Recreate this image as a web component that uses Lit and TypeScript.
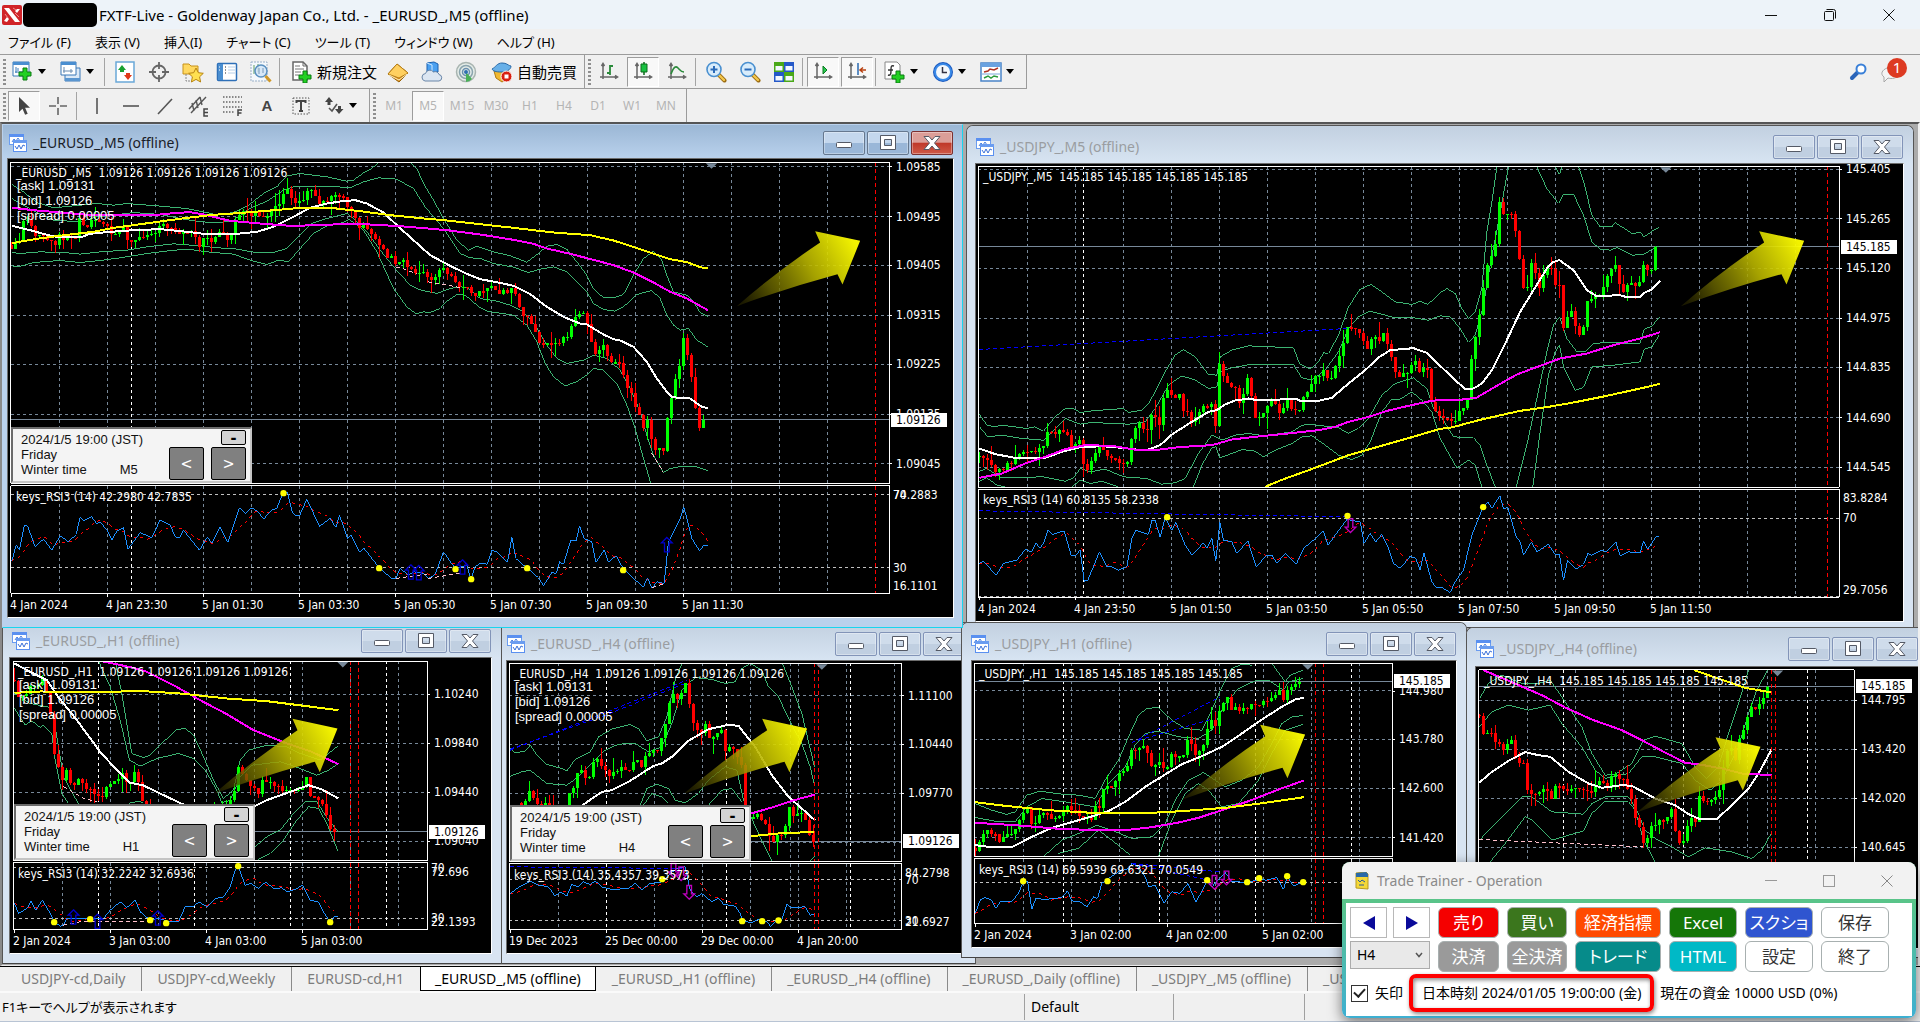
import { LitElement, html, svg, css, nothing } from "lit";
import { customElement, property } from "lit/decorators.js";
import { classMap } from "lit/directives/class-map.js";
import { styleMap } from "lit/directives/style-map.js";

type Pt = [number, number];

interface Chart {
  origin: Pt;
  plot: [number, number, number, number];
  sub: [number, number];
  grid: number[];
  days: number[];
  red: number[];
  levels: number[];
  bid: number;
  subLevels: number[];
  axisX: number;
  axis: [number, string][];
  bidText: string;
  subAxis: [number, string][];
  dates: [number, string][];
  ma: string[];
  bands: string[];
  price: string[];
  rsi: string;
  dots: string;
  up?: string;
  down?: string;
  pink?: string[];
  blue?: string[];
  marker: number;
  tip: Pt;
  head: string;
  quotes?: boolean;
  rsiHead: string;
}

interface Win {
  title: string;
  active?: boolean;
  x: number;
  y: number;
  w: number;
  h: number;
  cx: number;
  cy: number;
  cw: number;
  ch: number;
  panel?: { x: number; y: number; tf: string };
  chart: Chart;
}

const pts = (s: string): Pt[] =>
  s.trim().split(/\s+/).map((p) => p.split(",").map(Number) as Pt);

/* Straight-line value of a series at a given x. */
const at = (s: Pt[], x: number): number => {
  if (x <= s[0][0]) return s[0][1];
  for (let i = 1; i < s.length; i++) {
    if (x <= s[i][0]) {
      const [a, b] = [s[i - 1], s[i]];
      return a[1] + ((b[1] - a[1]) * (x - a[0])) / (b[0] - a[0] || 1);
    }
  }
  return s[s.length - 1][1];
};

const steps = (from: number, to: number, by: number) => {
  const out: number[] = [];
  for (let v = from; v <= to; v += by) out.push(v);
  return out;
};

/* Chart series are kept on a grid of three units to the pixel. */
const eurM5: Chart = {
  origin: [0, 125],
  plot: [32, 112, 2669, 1075],
  sub: [1082, 1405],
  grid: steps(179, 2500, 144),
  days: [395],
  red: [2627],
  levels: [125, 275, 421, 571, 718, 868, 1016],
  bid: 884,
  subLevels: [1109, 1328],
  axisX: 896,
  axis: [[125, "1.09585"], [275, "1.09495"], [421, "1.09405"], [571, "1.09315"], [718, "1.09225"], [868, "1.09135"], [1016, "1.09045"]],
  bidText: "1.09126",
  subAxis: [[1109, "74.2883"], [1109, "70"], [1328, "30"], [1382, "16.1101"]],
  dates: [[30, "4 Jan 2024"], [318, "4 Jan 23:30"], [607, "5 Jan 01:30"], [895, "5 Jan 03:30"], [1183, "5 Jan 05:30"], [1471, "5 Jan 07:30"], [1759, "5 Jan 09:30"], [2047, "5 Jan 11:30"]],
  ma: [
    "35,302 90,315 155,333 190,337 240,337 270,326 330,320 400,315 480,312 560,320 620,327 700,327 770,320 820,305 870,280 930,248 980,235 1020,229 1065,225 1100,235 1150,262 1190,300 1240,345 1290,390 1350,422 1400,446 1440,462 1500,473 1540,482 1590,507 1640,545 1690,575 1740,595 1760,598 1810,628 1840,642 1860,646 1900,665 1940,710 1970,760 2000,800 2015,815 2040,819 2070,820 2105,845 2123,849",
    "35,248 110,256 250,268 380,270 460,270 520,264 570,261 610,268 690,287 790,296 870,302 960,300 1040,296 1110,298 1200,303 1260,308 1340,315 1440,328 1540,344 1600,356 1640,370 1710,386 1780,404 1840,420 1900,442 1960,472 2010,500 2060,520 2123,555",
    "35,354 110,341 200,329 280,320 340,308 400,300 480,289 560,278 640,269 700,265 800,257 900,248 1000,249 1080,258 1170,270 1250,278 1340,286 1440,297 1540,308 1660,322 1770,330 1840,346 1890,362 1950,382 2010,402 2060,411 2100,426 2123,430",
  ],
  bands: [
    "35,178 70,200 110,232 160,248 240,240 290,235 340,240 380,235 470,242 560,250 620,262 650,270 700,262 745,240 790,205 830,185 860,152 900,145 980,155 1040,168 1060,165 1090,143 1115,130 1135,112",
    "1230,112 1250,130 1270,175 1300,225 1330,280 1370,345 1405,375 1430,363 1480,380 1530,392 1580,411 1615,385 1640,363 1670,358 1700,372 1730,410 1760,450 1780,490 1810,518 1840,518 1870,508 1900,450 1930,400 1960,378 1985,405 2000,450 2020,500 2060,510 2080,530 2100,562 2123,573",
    "35,220 60,235 110,262 160,285 240,290 290,275 340,270 400,262 480,268 540,280 600,290 660,292 700,285 745,252 800,228 850,195 880,185 940,183 1000,184 1050,188 1090,170 1135,158 1190,162 1240,190 1275,245 1330,310 1380,385 1410,398 1440,400 1480,415 1540,426 1585,442 1620,432 1660,425 1700,440 1730,470 1760,500 1780,535 1810,553 1845,558 1870,545 1910,508 1955,496 1980,520 2000,570 2020,600 2040,615 2065,610 2090,645 2123,665",
    "35,382 60,385 120,380 200,383 240,387 300,380 380,375 440,365 520,356 600,362 650,368 700,370 760,381 820,382 860,370 895,335 935,295 980,280 1040,265 1060,280 1100,320 1140,375 1180,425 1230,480 1255,493 1310,505 1350,490 1380,485 1400,487 1440,520 1490,528 1530,540 1570,560 1605,600 1640,660 1670,700 1700,715 1750,705 1780,690 1820,700 1860,735 1890,790 1920,860 1940,930 1960,990 1990,1042 2010,1030 2040,1024 2090,1025 2123,1036",
    "35,422 55,425 100,412 180,406 240,412 300,406 360,398 440,385 520,375 570,373 620,380 700,387 750,405 800,418 835,405 865,410 900,370 940,325 980,302 1020,295 1048,283 1090,315 1130,380 1180,490 1220,545 1248,566 1270,560 1290,562 1320,550 1340,528 1370,508 1395,510 1440,548 1460,558 1540,570 1580,600 1610,650 1635,715 1660,755 1695,782 1730,770 1770,742 1780,730 1810,735 1850,775 1880,840 1905,910 1930,1000 1952,1075",
  ],
  price: [
    "35,365 50,345 62,350 75,275 95,310 110,340 130,330 150,345 165,365 180,330 205,345 230,340 240,280 260,300 290,285 310,300 340,325 370,310 385,360 395,355 420,325 450,330 465,330 485,295 520,310 545,330 570,320 600,360 620,340 640,345 665,320 690,355 705,300 715,265 745,270 770,262 800,272 840,240 860,195 885,238 905,235 925,185 945,205 965,240 990,220 1030,210 1045,255 1080,300 1120,325 1145,370 1170,400 1195,412 1215,410 1230,435 1260,440 1290,462 1320,435 1340,430 1370,485 1405,480 1420,525 1440,505 1480,490 1530,512 1537,475 1555,545 1590,590 1630,670 1660,650 1700,640 1715,595 1745,555 1765,595 1785,690 1810,655 1835,715 1855,700 1880,780 1905,830 1930,900 1950,885 1958,985 1985,970 1995,985 2005,845 2040,720 2052,640 2075,750 2088,850 2100,915 2112,885",
  ],
  rsi: "35,1307 48,1260 58,1275 72,1202 82,1202 105,1265 130,1242 155,1275 180,1232 205,1250 228,1228 240,1175 250,1187 275,1175 290,1197 300,1190 320,1215 335,1245 350,1218 370,1207 383,1272 400,1250 420,1222 455,1238 480,1184 510,1200 525,1235 538,1238 550,1215 598,1275 622,1235 635,1255 660,1205 683,1252 700,1200 718,1148 735,1165 755,1148 775,1160 790,1182 815,1155 830,1150 848,1103 862,1100 875,1158 885,1170 898,1172 920,1122 940,1165 958,1204 990,1180 1007,1207 1018,1170 1042,1240 1052,1230 1078,1280 1092,1270 1137,1328 1175,1360 1187,1360 1200,1330 1225,1350 1240,1340 1270,1345 1285,1360 1305,1348 1330,1280 1365,1330 1400,1320 1412,1362 1425,1325 1440,1315 1462,1317 1475,1275 1490,1280 1522,1312 1535,1235 1547,1300 1580,1328 1615,1358 1630,1382 1655,1342 1668,1345 1678,1310 1690,1318 1712,1245 1728,1247 1738,1202 1752,1240 1775,1250 1787,1312 1812,1275 1825,1310 1848,1292 1870,1332 1900,1360 1930,1385 1942,1358 1956,1390 1970,1370 1992,1375 2005,1250 2040,1180 2051,1145 2075,1240 2098,1277 2110,1262 2123,1260",
  dots: "850,1104 1137,1329 1366,1332 1413,1362 1581,1329 1869,1335",
  up: "1232,1340 1256,1342 1387,1325 2000,1258",
  pink: ["1187,425 1250,445", "1285,470 1380,487", "1187,1360 1290,1345", "1285,1360 1390,1342", "1955,985 1990,1042", "1956,1388 1992,1375"],
  marker: 2134,
  tip: [2580, 347],
  head: "_EURUSD_,M5  1.09126 1.09126 1.09126 1.09126",
  quotes: true,
  rsiHead: "keys_RSI3 (14) 42.2980 42.7835",
};

const usdM5: Chart = {
  origin: [965, 125],
  plot: [40, 124, 2623, 1087],
  sub: [1093, 1416],
  grid: steps(187, 2500, 144),
  days: [355],
  red: [2587],
  levels: [133, 281, 430, 580, 727, 878, 1027],
  bid: 365,
  subLevels: [1180, 1413],
  axisX: 1846,
  axis: [[133, "145.405"], [281, "145.265"], [430, "145.120"], [580, "144.975"], [727, "144.835"], [878, "144.690"], [1027, "144.545"]],
  bidText: "145.185",
  subAxis: [[1120, "83.8284"], [1180, "70"], [1394, "29.7056"]],
  dates: [[39, "4 Jan 2024"], [327, "4 Jan 23:50"], [615, "5 Jan 01:50"], [903, "5 Jan 03:50"], [1191, "5 Jan 05:50"], [1479, "5 Jan 07:50"], [1767, "5 Jan 09:50"], [2055, "5 Jan 11:50"]],
  ma: [
    "43,970 90,987 150,998 240,998 290,980 340,967 410,963 470,968 530,975 550,973 585,960 620,928 680,890 730,860 755,855 780,838 810,826 850,820 870,824 930,824 990,820 1010,829 1050,829 1100,818 1150,775 1200,735 1240,697 1275,675 1345,669 1385,683 1425,722 1465,760 1500,792 1525,790 1550,775 1580,735 1625,645 1665,560 1705,495 1745,430 1765,410 1783,405 1825,435 1865,495 1895,513 1965,510 1985,516 2025,516 2037,503 2060,493 2085,467",
    "43,1058 110,1045 180,1015 240,995 300,972 360,960 440,962 520,975 570,975 640,966 740,960 800,943 870,935 960,926 1060,915 1110,905 1150,890 1210,875 1270,856 1330,842 1390,829 1425,824 1485,824 1535,817 1595,782 1655,748 1725,722 1785,700 1865,685 1945,660 2025,640 2085,621",
    "900,1085 950,1064 1050,1028 1150,990 1200,976 1270,956 1340,936 1425,911 1455,908 1545,884 1665,857 1745,846 1825,832 1925,812 2025,790 2085,776",
  ],
  bands: [
    "43,868 65,900 90,905 110,900 185,910 210,905 235,918 270,875 300,850 325,850 345,862 380,857 475,850 490,862 530,855 550,835 570,800 600,740 630,690 655,673 690,695 730,748 755,750 765,695 800,675 850,662 985,668 1003,715 1035,732 1060,710 1075,683 1090,685 1120,630 1150,545 1185,492 1217,478 1250,500 1290,530 1340,538 1365,528 1388,538 1425,503 1445,490 1470,505 1490,550 1510,580 1530,560 1550,490 1565,320 1580,230 1595,125",
    "1770,125 1783,148 1790,125",
    "1840,125 1857,175 1880,270 1905,305 1940,305 1950,292 2000,325 2025,322 2037,335 2065,315 2082,307",
    "43,905 68,935 110,930 170,940 235,945 275,905 300,880 345,897 380,892 490,897 540,890 570,850 610,780 650,752 690,765 730,790 755,785 765,740 800,728 860,717 985,718 1010,758 1040,765 1080,735 1120,680 1150,610 1180,575 1215,558 1290,578 1345,578 1390,585 1425,572 1455,575 1485,610 1510,652 1530,630 1555,540 1575,420 1600,290 1630,125",
    "1715,125 1745,190 1780,235 1795,207 1825,207 1855,270 1880,350 1905,372 1935,375 1955,367 2000,390 2035,388 2065,370 2082,362",
    "43,1038 65,1030 110,1058 235,1055 300,1068 325,1058 345,1030 375,1040 420,1032 475,1055 545,1060 590,1077 630,1073 660,1060 700,985 740,930 770,945 810,930 850,925 900,932 980,920 1010,900 1040,898 1120,908 1150,925 1180,910 1210,880 1250,810 1290,775 1345,758 1385,790 1405,850 1425,870 1465,935 1525,938 1545,960 1565,1020 1590,1085",
    "1653,1085 1685,960 1715,820 1745,680 1765,600 1783,575 1805,640 1835,680 1860,680 1885,655 1925,652 2025,655 2037,612 2060,603 2082,577",
    "43,1068 65,1058 95,1080 120,1085",
    "320,1085 345,1065 375,1075 410,1068 460,1085",
    "685,1085 710,1020 740,968 752,965 763,998 800,985 830,973 870,978 895,995 930,975 980,955 1010,935 1040,932 1080,960 1120,990 1160,1003 1190,990 1215,950 1250,860 1280,822 1305,822 1340,800 1370,825 1400,860 1425,940 1475,1028 1510,1005 1530,1020 1550,1085",
    "1703,1085 1725,920 1750,750 1770,680 1783,660 1795,725 1830,795 1855,787 1880,725 1945,720 2025,710 2037,672 2060,665 2082,630",
  ],
  price: [
    "43,1000 60,992 70,1020 95,1040 130,1015 150,1005 185,978 205,985 235,970 250,915 270,925 300,912 320,960 345,950 357,1035 370,1035 400,970 415,970 430,1000 470,1015 487,1010 500,930 515,900 550,910 562,850 585,895 597,815 610,795 625,830 637,795 655,850 680,890 710,855 740,840 752,900 765,685 778,765 810,780 825,830 850,755 873,890 900,850 930,825 935,870 965,825 1000,870 1020,800 1050,765 1075,730 1095,770 1125,680 1148,610 1190,615 1200,680 1225,625 1240,660 1255,620 1275,670 1290,745 1320,750 1345,705 1370,755 1382,695 1400,830 1420,885 1435,870 1455,900 1485,860 1505,835 1520,690 1545,570 1560,460 1575,380 1585,410 1605,220 1620,280 1635,245 1650,320 1665,410 1680,520 1700,410 1720,490 1750,415 1775,490 1790,480 1798,690 1810,540 1825,570 1840,630 1860,590 1870,500 1885,530 1915,480 1953,415 1967,500 1995,480 2025,480 2037,405 2053,450 2073,365",
  ],
  rsi: "43,1315 55,1308 70,1325 93,1350 115,1315 155,1305 180,1273 200,1280 212,1253 225,1270 237,1250 248,1215 262,1228 280,1222 297,1217 318,1290 330,1292 345,1275 357,1368 368,1365 403,1280 425,1325 440,1325 460,1335 485,1325 500,1240 512,1215 550,1228 560,1185 570,1185 585,1237 600,1178 620,1215 632,1192 660,1260 680,1290 715,1253 725,1270 740,1240 752,1308 764,1190 775,1245 800,1250 815,1285 848,1247 873,1325 905,1290 920,1290 935,1315 960,1285 993,1318 1015,1270 1045,1245 1075,1217 1088,1260 1145,1183 1185,1190 1197,1255 1215,1225 1232,1250 1250,1228 1268,1265 1285,1315 1305,1330 1335,1293 1352,1300 1365,1335 1376,1283 1400,1370 1412,1387 1430,1387 1455,1402 1470,1370 1495,1335 1520,1230 1550,1155 1568,1130 1580,1150 1604,1112 1615,1150 1628,1147 1653,1235 1665,1250 1675,1290 1699,1250 1715,1280 1750,1257 1770,1288 1783,1287 1795,1365 1807,1305 1832,1332 1855,1318 1868,1285 1880,1290 1905,1277 1925,1278 1952,1250 1965,1292 1990,1280 2025,1283 2035,1248 2048,1272 2072,1235 2082,1234",
  dots: "606,1176 1147,1172 1554,1146",
  down: "1156,1203",
  blue: ["43,673 1145,610", "43,1157 1150,1175"],
  marker: 2102,
  tip: [2517, 347],
  head: "_USDJPY_,M5  145.185 145.185 145.185 145.185",
  rsiHead: "keys_RSI3 (14) 60.8135 58.2338",
};

const eurH1: Chart = {
  origin: [0, 620],
  plot: [40, 123, 1283, 720],
  sub: [728, 928],
  grid: [187, 331, 475, 619, 763, 907, 1051, 1195],
  days: [295, 583, 871, 1159],
  red: [1051, 1075],
  levels: [223, 370, 517, 664],
  bid: 635,
  subLevels: [742, 895],
  axisX: 434,
  axis: [[223, "1.10240"], [370, "1.09840"], [517, "1.09440"], [664, "1.09040"]],
  bidText: "1.09126",
  subAxis: [[744, "70"], [755, "72.696"], [895, "30"], [905, "22.1393"]],
  dates: [[40, "2 Jan 2024"], [328, "3 Jan 03:00"], [616, "4 Jan 03:00"], [904, "5 Jan 03:00"]],
  ma: [
    "43,130 90,155 140,180 170,225 230,300 300,395 350,450 388,487 430,496 480,520 545,551 640,590 765,557 800,540 870,515 925,495 965,508 1015,535",
    "305,123 400,143 440,155 520,195 600,240 680,282 760,330 860,370 930,393 1015,432",
    "43,218 120,214 300,215 430,213 540,220 680,235 800,243 920,258 1015,270",
  ],
  bands: [
    "43,265 75,315 95,302 120,322 130,315 155,340 165,420 185,520 205,550",
    "43,220 90,250 150,262 165,320 190,470 235,551",
    "345,123 365,220 395,400 430,412 450,405 490,365 530,328 555,325 580,345 610,410 640,480 670,535 700,510 720,420 745,390 800,375 860,380 900,400 960,420 985,400 1013,378",
    "295,123 330,200 360,300 388,420 420,438 470,415 535,400 580,415 615,450 650,510 665,548 690,540 720,470 755,435 840,425 900,445 950,465 985,450 1015,430",
    "765,680 800,650 840,630 880,580 915,545 950,545 985,600 1015,635",
    "775,718 810,700 850,660 890,600 925,560 955,565 980,610 1013,692",
    "388,549 415,543 430,549",
  ],
  price: [
    "43,185 60,240 90,200 130,180 150,265 162,400 175,450 190,490 203,445 215,525 230,470 260,505 295,535 330,490 350,485 365,450 385,490 410,455 430,545 450,580 550,620 690,545 705,510 716,435 735,475 760,500 775,515 790,475 810,480 830,505 870,515 900,500 920,480 935,535 960,540 985,590 995,655 1003,635",
  ],
  rsi: "43,850 55,880 80,865 93,843 107,870 127,840 150,880 162,905 180,918 190,915 200,895 230,895 270,897 310,895 330,870 360,845 380,862 405,840 420,875 450,900 475,895 510,905 535,905 555,860 580,858 597,845 620,860 645,835 670,830 690,800 705,750 714,738 735,795 752,790 775,805 797,785 820,805 845,803 860,815 885,808 907,795 930,840 955,845 970,875 990,905 1005,888 1013,890",
  dots: "162,906 270,897 450,900 498,909 714,738 990,906",
  up: "220,890 292,903 473,893",
  pink: ["190,915 240,905 460,905", "190,500 250,535 290,545"],
  marker: 1028,
  tip: [1012, 325],
  head: "_EURUSD_,H1  1.09126 1.09126 1.09126 1.09126",
  quotes: true,
  rsiHead: "keys_RSI3 (14) 32.2242 32.6936",
};

const eurH4: Chart = {
  origin: [495, 620],
  plot: [43, 130, 1220, 723],
  sub: [731, 928],
  grid: [190, 478, 622, 766, 886, 910, 1054, 1198],
  days: [334, 694, 1066],
  red: [958, 970],
  levels: [227, 373, 520, 667],
  bid: 664,
  subLevels: [778, 902],
  axisX: 908,
  axis: [[227, "1.11100"], [373, "1.10440"], [520, "1.09770"]],
  bidText: "1.09126",
  subAxis: [[758, "84.2798"], [780, "70"], [904, "30"], [905, "21.6927"]],
  dates: [[43, "19 Dec 2023"], [331, "25 Dec 00:00"], [619, "29 Dec 00:00"], [905, "4 Jan 20:00"]],
  ma: [
    "262,555 320,515 350,510 400,485 475,437 500,430 530,410 580,362 640,327 700,314 730,317 780,380 830,465 880,530 920,565 960,601",
    "768,580 830,562 890,542 960,523",
    "768,648 870,638 960,636",
  ],
  bands: [
    "45,385 60,398 90,393 105,375 125,405 155,433 200,445 215,452 240,418 285,395 310,350 350,327 405,313 430,325 455,362 490,350 515,290 540,180 560,130",
    "45,468 80,455 105,450 155,490 215,495 250,470 300,420 330,390 370,372 420,370 460,395 500,380 530,310 560,210 600,172 650,178 690,190 720,185 740,145 765,130 800,150 820,200 850,230 885,305 920,370 945,440 958,495",
    "862,130 890,200 920,280 958,440",
    "435,555 455,505 485,492 520,505 540,540 570,548 610,520 640,480 690,440 725,450 745,540 790,640 830,723",
    "445,555 470,520 500,530 520,550",
    "640,555 680,510 710,505 740,545",
    "945,723 958,708",
  ],
  price: [
    "80,555 105,520 125,545 160,552 215,600 228,490 240,500 252,445 280,480 300,410 325,440 350,468 370,448 400,448 420,410 440,440 460,395 490,385 515,310 530,220 545,240 560,210 575,180 590,310 620,330 625,295 650,360 680,335 690,385 720,395 742,440 750,600 780,600 790,575 815,620 830,675 850,645 870,640 878,540 900,590 930,580 948,665 958,665",
  ],
  rsi: "45,820 70,802 105,783 130,795 160,800 180,828 195,815 215,828 230,793 250,800 265,785 285,793 300,782 320,800 350,808 400,805 420,790 440,808 465,790 500,785 520,765 545,745 570,740 585,810 605,830 620,820 650,845 670,835 685,852 720,858 735,880 742,903 770,907 790,898 815,905 826,918 845,900 860,898 875,853 890,862 930,860 945,885 958,882",
  dots: "501,777 741,903 801,903 850,901",
  down: "535,752 558,762 582,818",
  blue: ["45,390 575,180", "45,387 330,285 575,188", "45,740 560,745"],
  marker: 980,
  tip: [936, 325],
  head: "_EURUSD_,H4  1.09126 1.09126 1.09126 1.09126",
  quotes: true,
  rsiHead: "keys_RSI3 (14) 35.4357 39.3573",
};

const usdH1: Chart = {
  origin: [965, 620],
  plot: [28, 130, 1283, 709],
  sub: [716, 910],
  grid: [175, 319, 463, 607, 751, 763, 895, 1039, 1183],
  days: [295, 583, 871, 1159],
  red: [1051, 1075],
  levels: [211, 358, 505, 653],
  bid: 184,
  subLevels: [787],
  axisX: 1399,
  axis: [[213, "144.980"], [358, "143.780"], [505, "142.600"], [653, "141.420"]],
  bidText: "145.185",
  subAxis: [],
  dates: [[27, "2 Jan 2024"], [314, "3 Jan 02:00"], [602, "4 Jan 02:00"], [890, "5 Jan 02:00"]],
  ma: [
    "30,675 80,681 140,681 200,650 260,623 330,603 390,586 430,573 480,545 540,500 600,463 650,432 710,408 770,380 830,340 890,298 950,260 990,238 1016,233",
    "30,608 150,615 270,625 390,630 480,630 560,621 640,607 700,593 770,570 850,543 940,508 1016,481",
    "30,546 120,557 250,570 380,578 540,579 650,573 790,562 900,548 1016,531",
  ],
  bands: [
    "30,550 80,570 125,583 150,575 185,525 225,513 290,522 340,525 390,535 420,480 460,420 490,350 520,285 545,265 580,262 620,300 660,325 710,330 740,270 770,200 800,145 830,132 860,135",
    "30,592 100,605 150,605 185,560 230,535 300,545 390,560 430,490 480,440 510,375 540,340 580,333 640,350 700,355 740,330 780,250 820,205 870,182 910,180 955,210 970,185 1014,175",
    "920,130 960,185 975,165 1014,150",
    "235,709 290,660 340,640 395,615 440,630 500,655 560,650 600,610 630,540 670,480 715,457 750,480 780,500 830,480 880,440 920,370 950,310 980,290 1014,286",
    "280,700 340,685 400,630 440,660 495,705",
    "580,709 620,600 660,520 700,490 730,510 770,560 820,550 880,480 920,400 960,330 1014,312",
  ],
  price: [
    "30,690 43,660 60,630 80,640 100,660 120,635 150,630 175,580 190,565 203,640 215,585 260,590 310,565 340,585 380,590 390,565 400,570 415,510 440,500 460,460 480,465 500,380 520,390 540,370 555,430 585,430 600,460 620,400 650,410 670,355 695,405 715,380 730,300 755,310 765,265 780,230 800,265 870,260 890,235 920,238 940,215 962,245 970,180 985,200 1005,185",
  ],
  rsi: "30,880 45,840 60,832 80,840 92,865 105,845 140,843 160,820 172,790 187,783 200,867 212,835 240,838 290,832 307,812 320,842 345,845 365,860 385,830 397,835 410,790 430,775 460,755 490,745 500,730 520,740 540,770 550,800 570,795 597,848 620,815 645,820 668,790 692,845 712,810 725,782 740,800 780,757 800,785 847,786 882,778 905,780 935,772 955,808 966,770 985,797 1015,786",
  dots: "174,783 427,783 726,780 846,786 882,774 966,768 1014,786",
  down: "748,788 784,775",
  blue: ["500,367 765,230", "520,360 740,297", "500,730 720,778", "500,730 765,755"],
  marker: 1028,
  tip: [1020, 343],
  head: "_USDJPY_,H1  145.185 145.185 145.185 145.185",
  rsiHead: "keys_RSI3 (14) 69.5939 69.6321 70.0549",
};

const usdH4: Chart = {
  origin: [1455, 620],
  plot: [71, 149, 1198, 759],
  sub: [766, 960],
  grid: [217, 361, 505, 649, 793, 877, 937, 1081],
  days: [325, 685, 1057],
  red: [949, 961],
  levels: [240, 387, 535, 682],
  bid: 199,
  subLevels: [],
  axisX: 1861,
  axis: [[240, "144.795"], [387, "143.420"], [535, "142.020"], [682, "140.645"]],
  bidText: "145.185",
  subAxis: [],
  dates: [],
  ma: [
    "73,487 110,455 160,422 210,396 250,405 285,410 340,455 400,490 440,503 500,495 530,497 600,535 660,555 700,582 735,597 785,597 830,555 880,505 910,460 950,387",
    "85,150 160,182 260,225 330,262 410,298 500,330 560,360 620,392 690,428 740,434 800,445 860,460 950,465",
    "717,150 780,172 870,203 950,217",
  ],
  bands: [
    "73,235 100,190 140,165 200,190 250,190 285,180 320,230 380,320 410,400 450,465 480,463 530,430 565,360 600,348 680,370 720,440 755,475 790,440 820,340 850,250 880,150",
    "73,320 110,275 160,255 220,270 285,255 320,310 380,380 420,450 450,475 520,460 560,410 600,410 680,430 720,480 765,510 800,480 850,380 880,280 905,210 937,150",
    "73,660 130,600 200,530 230,530 290,575 385,582 410,550 450,530 520,530 545,570 570,630 600,655 650,680 700,710 750,683 830,695 890,715 920,690 950,637",
    "105,725 150,670 210,590 230,600 290,660 385,632 410,580 450,543 520,545 540,570 565,660 600,725",
  ],
  price: [
    "73,290 85,340 110,345 130,370 150,395 165,340 185,420 205,430 217,515 240,520 260,500 290,540 302,485 330,505 350,500 390,502 410,515 430,485 460,500 475,460 500,475 515,500 530,550 545,600 570,675 585,625 610,595 635,610 642,560 655,570 665,660 690,655 700,600 725,595 735,520 750,545 790,525 800,460 820,370 840,420 855,355 880,290 890,265 920,250 937,215 942,200",
  ],
  rsi: "73,860 950,860",
  dots: "",
  pink: ["73,658 565,680"],
  marker: 967,
  tip: [916, 380],
  head: "_USDJPY_,H4  145.185 145.185 145.185 145.185",
  rsiHead: "",
};

const windows: Win[] = [
  { title: "_USDJPY_,M5 (offline)", x: 966, y: 125, w: 948, h: 503, cx: 976, cy: 164, cw: 927, ch: 457, chart: usdM5 },
  { title: "_EURUSD_,H4 (offline)", x: 497, y: 622, w: 479, h: 342, cx: 507, cy: 661, cw: 458, ch: 292, panel: { x: 510, y: 805, tf: "H4" }, chart: eurH4 },
  { title: "_EURUSD_,H1 (offline)", x: 2, y: 619, w: 500, h: 345, cx: 10, cy: 658, cw: 481, ch: 295, panel: { x: 14, y: 804, tf: "H1" }, chart: eurH1 },
  { title: "_USDJPY_,H1 (offline)", x: 961, y: 622, w: 506, h: 336, cx: 972, cy: 661, cw: 484, ch: 286, chart: usdH1 },
  { title: "_USDJPY_,H4 (offline)", x: 1466, y: 627, w: 463, h: 331, cx: 1476, cy: 667, cw: 443, ch: 281, chart: usdH4 },
  { title: "_EURUSD_,M5 (offline)", active: true, x: 2, y: 124, w: 961, h: 504, cx: 8, cy: 159, cw: 945, ch: 458, panel: { x: 11, y: 427, tf: "M5" }, chart: eurM5 },
];

const DESK: Pt = [2, 124];

@customElement("price-chart")
export class PriceChart extends LitElement {
  @property({ attribute: false }) win!: Win;

  static styles = css`
    :host { display: block; }
    svg { display: block; background: #000; }
    .crisp { shape-rendering: crispEdges; }
    polyline, .frame, .grid, .day, .red, .bid, .level { fill: none; stroke-width: 3; }
    .frame { stroke: #fff; }
    .grid { stroke: #778899; stroke-dasharray: 9 9; }
    .day { stroke: #fff; stroke-dasharray: 9 9; }
    .level { stroke: #c0c0c0; stroke-dasharray: 9 9; }
    .red { stroke: #f00; stroke-dasharray: 12 9; }
    .bid { stroke: #778899; }
    .band { stroke: #3cb371; }
    .ma0 { stroke: #fff; stroke-width: 6; }
    .ma1 { stroke: #f0f; stroke-width: 6; }
    .ma2 { stroke: #ff0; stroke-width: 6; }
    .up { fill: #0f0; }
    .dn { fill: #f00; }
    .rsi { stroke: #1e90ff; }
    .sig { stroke: #f00; stroke-dasharray: 9 12; }
    .pink { stroke: #ffc0cb; stroke-dasharray: 12 9; }
    .blue { stroke: #00f; stroke-dasharray: 12 9; }
    .dot { fill: #ff0; }
    .buy { fill: none; stroke: #0000cd; stroke-width: 4; }
    .sell { fill: none; stroke: #c000c0; stroke-width: 4; }
    .mark { fill: #778899; }
    text { fill: #fff; font: 12px "DejaVu Sans Condensed", "DejaVu Sans", sans-serif; white-space: pre; }
    text.quote { font: 13px "Liberation Sans", sans-serif; }
    text.now { fill: #000; }
    .box { fill: #fff; }
  `;

  private candles(series: string, from: number) {
    const s = pts(series);
    const out = [];
    let seed = Math.round(s[0][1] * 7 + s.length * 13);
    const rnd = () => {
      seed = (seed * 1103515245 + 12345) % 2147483648;
      return seed / 2147483648;
    };
    const end = s[s.length - 1][0] + 3;
    let open = at(s, from) - 6;
    for (let x = from; x <= end; x += 12) {
      const last = x + 12 > end;
      const close = last ? s[s.length - 1][1] : at(s, x) + (rnd() - 0.5) * 20;
      const top = Math.min(open, close);
      const bottom = Math.max(open, close, top + 4);
      const hi = top - rnd() * rnd() * 50;
      const lo = bottom + rnd() * rnd() * 50;
      out.push(svg`<path class=${close <= open ? "up" : "dn"}
        d="M${x - 4},${top}h9V${bottom}h-9zM${x - 1},${hi}h3V${lo}h-3z"/>`);
      open = close;
    }
    return out;
  }

  private signal(series: string) {
    const s = pts(series);
    const out: string[] = [];
    for (let x = s[0][0]; x <= s[s.length - 1][0]; x += 12) {
      let sum = 0;
      for (let k = 0; k < 6; k++) sum += at(s, Math.max(s[0][0], x - k * 12));
      out.push(`${x},${sum / 6}`);
    }
    return out.join(" ");
  }

  render() {
    const w = this.win;
    const c = w.chart;
    const [ox, oy] = c.origin;
    const [l, t, r, b] = c.plot;
    const [st, sb] = c.sub;
    const px = (v: number) => ox + Math.round(v / 3);
    const py = (v: number) => oy + Math.round(v / 3);
    const [ax, ay] = c.tip;
    return html`<svg width=${w.cw} height=${w.ch} viewBox="${w.cx} ${w.cy} ${w.cw} ${w.ch}" role="img" aria-label=${w.title}>
      <defs>
        <linearGradient id="gold" gradientUnits="userSpaceOnUse" x1=${ax - 350} y1=${ay + 190} x2=${ax - 20} y2=${ay}>
          <stop offset="0" stop-color="#2e2b00" stop-opacity="0.6" />
          <stop offset="0.25" stop-color="#6a6600" stop-opacity="0.8" />
          <stop offset="0.6" stop-color="#b8b400" stop-opacity="0.9" />
          <stop offset="1" stop-color="#ffff00" stop-opacity="0.95" />
        </linearGradient>
        <clipPath id="main"><rect x=${l} y=${t} width=${r - l} height=${b - t} /></clipPath>
        <clipPath id="lower"><rect x=${l} y=${st} width=${r - l} height=${sb - st} /></clipPath>
      </defs>
      <g transform="translate(${ox + 1 / 6} ${oy + 1 / 6}) scale(0.33333)">
        <g class="crisp">
          ${c.grid.map((x) => svg`<path class="grid" d="M${x},${t}V${b}M${x},${st}V${sb}"/>`)}
          ${c.levels.map((y) => svg`<path class="grid" d="M${l},${y}H${r}"/>`)}
          ${c.subLevels.map((y) => svg`<path class="level" d="M${l},${y}H${r}"/>`)}
          ${c.days.map((x) => svg`<path class="day" d="M${x},${t}V${b}M${x},${st}V${sb}"/>`)}
          <path class="bid" d="M${l},${c.bid}H${r}" />
        </g>
        <g clip-path="url(#main)">
          <g class="crisp">
            ${c.bands.map((p) => svg`<polyline class="band" points=${p}/>`)}
            ${c.price.map((p) => this.candles(p, pts(p)[0][0]))}
          </g>
          ${c.ma.map((p, i) => svg`<polyline class="ma${i} crisp" points=${p}/>`)}
        </g>
        <g clip-path="url(#lower)" class="crisp">
          <polyline class="sig" points=${this.signal(c.rsi)} />
          <polyline class="rsi" points=${c.rsi} />
        </g>
        ${(c.pink ?? []).map((p) => svg`<polyline class="pink crisp" points=${p}/>`)}
        ${(c.blue ?? []).map((p) => svg`<polyline class="blue crisp" points=${p}/>`)}
        ${c.red.map((x) => svg`<path class="red crisp" d="M${x},${t}V${b}M${x},${st}V${sb}"/>`)}
        ${c.up ? pts(c.up).map(([x, y]) => svg`<path class="buy" d="M${x},${y - 21}l16,16h-9v27h-14v-27h-9z"/>`) : nothing}
        ${c.down ? pts(c.down).map(([x, y]) => svg`<path class="sell" d="M${x},${y + 19}l16,-16h-9v-25h-14v25h-9z"/>`) : nothing}
        ${c.dots ? pts(c.dots).map(([x, y]) => svg`<circle class="dot" cx=${x} cy=${y} r="9.5"/>`) : nothing}
        <path class="mark" d="M${c.marker - 17},${t + 2}h34l-17,17z" />
        <path fill="url(#gold)" d="M${ax},${ay}L${ax - 135},${ay - 29}L${ax - 120},${ay + 5}Q${ax - 248},${ay + 90} ${ax - 370},${ay + 196}Q${ax - 220},${ay + 141} ${ax - 68},${ay + 100}L${ax - 53},${ay + 131}z" />
        <g class="crisp">
          <path class="frame" d="M${l},${t}H${r}V${b}H${l}zM${l},${st}H${r}V${sb}H${l}z" />
          ${c.axis.map(([y]) => svg`<path class="frame" d="M${r},${y}h7"/>`)}
          ${c.dates.map(([x]) => svg`<path class="frame" d="M${x + 4},${sb}v10"/>`)}
        </g>
      </g>
      <text x=${px(l) + 5} y=${py(t) + 15}>${c.head}</text>
      ${c.quotes
        ? svg`<text class="quote" x=${px(l) + 6} y=${py(t) + 28}>[ask] 1.09131</text>
          <text class="quote" x=${px(l) + 6} y=${py(t) + 43}>[bid] 1.09126</text>
          <text class="quote" x=${px(l) + 6} y=${py(t) + 58}>[spread] 0.00005</text>`
        : nothing}
      <text x=${px(l) + 5} y=${py(st) + 15}>${c.rsiHead}</text>
      ${c.axis.map(([y, s]) => svg`<text x=${c.axisX} y=${py(y) + 4}>${s}</text>`)}
      ${c.subAxis.map(([y, s]) => svg`<text x=${c.axisX - 3} y=${py(y) + 4}>${s}</text>`)}
      <rect class="box" x=${c.axisX - 5} y=${py(c.bid) - 7} width="56" height="14" />
      <text class="now" x=${c.axisX} y=${py(c.bid) + 4}>${c.bidText}</text>
      ${c.dates.map(([x, s]) => svg`<text x=${px(x)} y=${py(sb) + 16}>${s}</text>`)}
    </svg>`;
  }
}

@customElement("mdi-window")
export class MdiWindow extends LitElement {
  @property({ attribute: false }) win!: Win;

  static styles = css`
    :host { position: absolute; display: block; }
    .frame { box-sizing: border-box; height: 100%; background: #d8e4f2; border: 1px solid #555; border-bottom-color: #444; border-radius: 7px 7px 0 0; overflow: hidden; }
    .frame.active { background: #bad1ec; border-color: #bad1ec #19d5ee #19d5ee #bad1ec; border-radius: 0; }
    header { display: flex; align-items: flex-start; gap: 2px; box-sizing: border-box; padding: 9px 10px 0 9px; background: linear-gradient(#c2d0e0, #d7e4f2); color: #9a9da1; }
    .active header { padding: 6px 9px 0 6px; background: linear-gradient(#9bb7d5, #b9d1ec); color: #1a2028; }
    header svg.logo { margin-top: 3px; flex: none; }
    h2 { margin: 0 auto 0 4px; font: 14px/24px "Noto Sans", "Open Sans", sans-serif; white-space: nowrap; }
    header button { width: 42px; height: 24px; box-sizing: border-box; padding: 0; display: grid; place-items: center; border: 1px solid #8294b8; border-radius: 2px; background: linear-gradient(#cfdceb 48%, #c0cfe1 52%); box-shadow: inset 0 0 0 1px #ffffff55; }
    header button svg { display: block; }
    .active header button { border-color: #66788f; background: linear-gradient(#c4d7ed 48%, #9ab7d8 52%); }
    .active header button.close { border-color: #7b3030; background: linear-gradient(#dc9e98 46%, #c0392a 52%, #cf5a48); }
    .client { position: relative; border: 1px solid; border-color: #6d6d6d #fff #fff #6d6d6d; width: max-content; }
    .panel { position: absolute; box-sizing: border-box; width: 241px; height: 56px; padding: 1px 4px 0 8px; background: #f4f4f4; border: 2px solid; border-color: #6b6b6b #c4c4c4 #c4c4c4 #6b6b6b; display: grid; grid-template-columns: 1fr auto; color: #111; font: 13px/15px "Liberation Sans", sans-serif; }
    .panel p { margin: 0; padding-top: 2px; }
    .panel p span { display: block; }
    .panel .row { display: flex; gap: 33px; }
    .keys { display: grid; grid-template-columns: 35px 35px; column-gap: 7px; row-gap: 2px; justify-items: end; align-content: start; }
    .keys button { width: 35px; height: 33px; padding: 0; border: 1px solid #000; border-radius: 2px; background: #808080; color: #fff; font: 16px/20px "DejaVu Sans Condensed", "DejaVu Sans", sans-serif; }
    .keys .min { grid-column: 2; width: 25px; height: 15px; background: #d3d3d3; color: #000; font: bold 18px/8px "Liberation Sans", sans-serif; }
  `;

  render() {
    const w = this.win;
    return html`<section class=${classMap({ frame: true, active: !!w.active })}>
      <header style=${styleMap({ height: `${w.cy - 2 - w.y}px` })}>
        <svg class="logo" width="18" height="18" viewBox="0 0 18 18">
          <rect x="0.5" y="0.5" width="14" height="10" fill="#fff" stroke="#6a9cf0" />
          <path d="M0 0h15v3h-15z" fill="#5a90f0" />
          <path d="M3 8l2-3 2 2 2-3 2 3" fill="none" stroke="#4a80e0" />
          <rect x="4.5" y="6.5" width="13" height="11" fill="#fff" stroke="#5a90f0" />
          <path d="M4 6h14v3h-14z" fill="#6a9cf0" />
          <path d="M6 12l2 3 2-4 2 4 2-4 2 1" fill="none" stroke="#3a70d8" />
        </svg>
        <h2>${w.title}</h2>
        <button type="button" aria-label="Minimize">
          <svg width="20" height="18" viewBox="0 0 20 18"><rect x="2.5" y="8.5" width="15" height="5" rx="1" fill="#fff" stroke="#555a66" /></svg>
        </button>
        <button type="button" aria-label="Maximize">
          <svg width="20" height="18" viewBox="0 0 20 18"><path d="M2.500 1.500h15v14h-15zM6.500 5.500v6h7v-6z" fill="#fff" fill-rule="evenodd" stroke="#555a66" /></svg>
        </button>
        <button type="button" class="close" aria-label="Close">
          <svg width="20" height="18" viewBox="0 0 20 18"><path d="M2 2.500h5l3 3.500 3-3.500h5l-5.500 6.500 5.500 6.500h-5l-3-3.500-3 3.500h-5l5.500-6.500z" fill="#fff" stroke="#555a66" stroke-linejoin="round" /></svg>
        </button>
      </header>
      <div class="client" style=${styleMap({ marginLeft: `${w.cx - 2 - w.x}px` })}>
        <price-chart .win=${w}></price-chart>
        ${w.panel
          ? html`<div class="panel" style=${styleMap({ left: `${w.panel.x - w.cx}px`, top: `${w.panel.y - w.cy}px` })}>
              <p><span>2024/1/5 19:00 (JST)</span><span>Friday</span><span class="row"><span>Winter time</span><span>${w.panel.tf}</span></span></p>
              <div class="keys">
                <button type="button" class="min">-</button>
                <button type="button">&lt;</button>
                <button type="button">&gt;</button>
              </div>
            </div>`
          : nothing}
      </div>
    </section>`;
  }
}

const plus = svg`<path d="M12 10h4v4h4v4h-4v4h-4v-4h-4v-4h4z" fill="#22d022" stroke="#0a7a12"/>`;
const axes = svg`<path d="M5 3v15M2 16h17M3.500 5l1.500-2.500 1.500 2.500M17 14.500l2.500 1.500-2.500 1.500" fill="none" stroke="#666" stroke-width="1.500"/>`;
const lens = (s: unknown) => svg`<path d="M13.500 13.500l6 6" stroke="#9a6a10" stroke-width="4" stroke-linecap="round"/><path d="M14 14l5 5" stroke="#f5c84c" stroke-width="2.400" stroke-linecap="round"/><circle cx="9" cy="8.500" r="7" fill="#d8ecfb" stroke="#4a90d0" stroke-width="1.600"/>${s}`;

const icons: Record<string, unknown> = {
  newchart: svg`<path d="M1 1h16v14h-16z" fill="#fff" stroke="#3a7ab8"/><path d="M1 1h16v3h-16z" fill="#4a8ed0"/><path d="M4 6v6M3 11h11M12 9v4M6 7v3" stroke="#3a7ab8" fill="none"/><path d="M11 7h4v4h4v4h-4v4h-4v-4h-4v-4h4z" fill="#22d022" stroke="#0a7a12"/>`,
  profiles: svg`<path d="M5 7h15v13h-15z" fill="#dbe9f7" stroke="#3a78b8"/><path d="M5 17h15v3h-15z" fill="#5a96d0"/><path d="M1 1h15v13h-15z" fill="#fff" stroke="#3a78b8"/><path d="M1 1h15v3h-15z" fill="#4a8ed0"/><path d="M4 6v6M3 10h10M11 8v4" stroke="#6a8cb0" fill="none"/>`,
  market: svg`<path d="M2 1h18v20h-18z" fill="#fff" stroke="#6aa8d8" stroke-width="1.500"/><path d="M4 9l4-5 4 5h-2v2h-4v-2z" fill="#18a030"/><path d="M10 14l4 5 4-5h-2v-2h-4v2z" fill="#e03818"/>`,
  cross: svg`<circle cx="11" cy="11" r="6.500" fill="none" stroke="#666" stroke-width="1.800"/><path d="M11 1v7M11 14v7M1 11h7M14 11h7" stroke="#666" stroke-width="1.800"/>`,
  star: svg`<path d="M1 3h6l2 2h7v8h-15z" fill="#ffd860" stroke="#c8921a"/><path d="M4 13v7h4" stroke="#888" stroke-dasharray="2 1" fill="none"/><path d="M14 7l2.300 4.700 5 .6-3.700 3.500 1 5.200-4.600-2.600-4.600 2.600 1-5.200-3.700-3.500 5-.6z" fill="#ffe050" stroke="#b88410"/>`,
  nav: svg`<rect x="1.500" y="2.500" width="19" height="17" rx="1" fill="#fff" stroke="#2f70b8" stroke-width="1.500"/><path d="M2 3h5v16h-5z" fill="#4a8ed0"/><path d="M3 6h1M3 9h1" stroke="#fff"/><path d="M9 6h1M9 9h1M9 12h1" stroke="#222"/><path d="M12 6h7M12 9h7M12 12h7" stroke="#b8d0e8"/>`,
  tester: svg`<path d="M1 1h16v19h-16z" fill="#f4f8fc" stroke="#9ab0c8" stroke-dasharray="2 1"/><path d="M4 4v9M8 3v8" stroke="#60a060"/><circle cx="11" cy="10" r="6" fill="#cfe4f6cc" stroke="#5a90c0" stroke-width="1.500"/><path d="M9 7v6M13 7v5" stroke="#7a9aba" fill="none"/><path d="M15.500 15l5 5.500" stroke="#d09828" stroke-width="3"/>`,
  order: svg`<path d="M2 1h10l4 4v14h-14z" fill="#fff" stroke="#666" stroke-width="1.500"/><path d="M12 1v4h4" fill="none" stroke="#666"/><path d="M4 5h5M4 8h9M4 11h6M4 14h4" stroke="#777"/>${plus}`,
  diamond: svg`<path d="M1 13l9-10 11 9-9 9z" fill="#d88a18" stroke="#9a6208"/><path d="M1 13l9-10 11 9-9 5z" fill="#ffd060" stroke="#b8801a"/><path d="M2 14l10 5 8-6" fill="none" stroke="#fff3c0"/>`,
  cloud: svg`<path d="M6 2l7-1 4 2v8h-11z" fill="#4aa0f0" stroke="#1a60b0"/><path d="M6 2l5 2v8" fill="none" stroke="#cfe8ff"/><path d="M4 20a3.800 3.800 0 0 1 .5-7.500 4.500 4.500 0 0 1 8-1.500 4 4 0 0 1 5.500 2.500 3.300 3.300 0 0 1 0 6.500z" fill="#dce6f2" stroke="#6a86a8"/>`,
  radio: svg`<circle cx="11" cy="11" r="9.500" fill="#e4ece8" stroke="#a8b4b0" stroke-width="1.500"/><circle cx="11" cy="11" r="6.500" fill="none" stroke="#8aa4ae" stroke-width="1.500"/><circle cx="11" cy="11" r="3.500" fill="none" stroke="#6a90b0" stroke-width="1.500"/><path d="M11 11v10a9.500 9.500 0 0 0 6-3z" fill="#4ab058"/><circle cx="11" cy="11" r="2" fill="#2f70b0"/>`,
  auto: svg`<path d="M3 10h15l-2 8-5 3-6-4z" fill="#f0b830" stroke="#b07a10"/><path d="M1 8c4-2 5-6 10-6s5 2 9 3c0 4-5 6-10 6s-8-1-9-3z" fill="#68b0e8" stroke="#2a6aa8"/><circle cx="15.500" cy="15.500" r="5.500" fill="#d82010" stroke="#fff"/><path d="M13.500 13.500h4v4h-4z" fill="#fff"/>`,
  bars: svg`${axes}<path d="M12 14v-10M12 12h-3M12 5h3" stroke="#2a8a3a" stroke-width="1.800"/>`,
  candle: svg`${axes}<path d="M12 1v13" stroke="#0a6a1a" stroke-width="1.500"/><path d="M9 3h6v8h-6z" fill="#18c040" stroke="#0a6a1a"/>`,
  line: svg`${axes}<path d="M5 13c3-8 5-8 7-6s3 4 6 4" fill="none" stroke="#2a8a3a" stroke-width="1.600"/>`,
  zoomin: lens(svg`<path d="M9 5v7M5.500 8.500h7" stroke="#2a6ab8" stroke-width="2"/>`),
  zoomout: lens(svg`<path d="M5.500 8.500h7" stroke="#2a6ab8" stroke-width="2"/>`),
  tile: svg`<path d="M1 1h10v10h-10zM11 11h10v10h-10z" fill="#4aa818"/><path d="M11 1h10v10h-10zM1 11h10v10h-10z" fill="#2458c8"/><path d="M2.500 5h7v4.500h-7zM12.500 5h7v4.500h-7zM2.500 15h7v4.500h-7zM12.500 15h7v4.500h-7z" fill="#f4f8ff"/>`,
  scroll: svg`${axes}<path d="M11 5l4 4-4 4z" fill="#2ac850" stroke="#0a7a20"/>`,
  shift: svg`${axes}<path d="M12 2v12" stroke="#2a6ab0" stroke-width="1.500"/><path d="M20 9h-5M17 6.500l-3 2.500 3 2.500" stroke="#b84010" fill="none" stroke-width="1.500"/>`,
  indicator: svg`<path d="M1 1h12l3 3v14h-15z" fill="#fff" stroke="#888"/><path d="M10 5c-3-1-3 1-3 4s0 6-3 5M4 9h5" fill="none" stroke="#333" stroke-width="1.400"/>${plus}`,
  clock: svg`<circle cx="11" cy="11" r="10" fill="#1a5ac0"/><circle cx="11" cy="11" r="9" fill="#3a8ae8"/><circle cx="11" cy="11" r="7" fill="#f4f8fc"/><path d="M10.500 6v5.500h4.500" fill="none" stroke="#334" stroke-width="1.500"/>`,
  template: svg`<path d="M1 2h20v18h-20z" fill="#fff" stroke="#4a84c8" stroke-width="1.500"/><path d="M1 2h20v4h-20z" fill="#6aa2e0"/><path d="M4 11l4-1 2-2 4 1 4-2" fill="none" stroke="#b03020" stroke-width="1.500"/><path d="M1 13h20" stroke="#7aa8d8"/><path d="M4 17l4-2 3 2 3-2 4 1" fill="none" stroke="#2a9a3a" stroke-width="1.500"/>`,
  cursor: svg`<path d="M6 2v15l3.500-3.200 2.600 6 2.600-1.100-2.600-6h4.900z" fill="#444"/>`,
  plusline: svg`<path d="M11 2v7M11 13v7M2 11h7M13 11h7" stroke="#666" stroke-width="1.600"/>`,
  vline: svg`<path d="M11 3v16" stroke="#555" stroke-width="1.600"/>`,
  hline: svg`<path d="M3 11h16" stroke="#555" stroke-width="1.600"/>`,
  trend: svg`<path d="M4 19l14-15" stroke="#555" stroke-width="1.600"/>`,
  channel: svg`<path d="M1 14l11-12M3 18l15-16M4 8l2 8M8 5l2 8M12 2l2 8" stroke="#555" stroke-width="1.400"/><path d="M20 14h-4v7h4M16 17.500h4" fill="none" stroke="#444" stroke-width="1.500"/>`,
  fibo: svg`<path d="M1 2h19M1 7h19M1 12h19M1 17h11" stroke="#666" stroke-width="1.500" stroke-dasharray="1.500 1.500"/><path d="M20 15h-4v6M16 18h3.500" fill="none" stroke="#444" stroke-width="1.500"/>`,
  label: svg`<rect x="3" y="3" width="16" height="16" fill="none" stroke="#555" stroke-dasharray="1.500 1.500"/><path d="M6.500 8v-2h9v2M11 6v10M9 16h4" fill="none" stroke="#444" stroke-width="2"/>`,
  arrows: svg`<path d="M6 2l4 5h-2.500v3h-3v-3h-2.500z" fill="#444"/><path d="M16 19l4.500-5h-2.500v-3h-3v3h-3z" fill="#444"/><path d="M6 13l3 3 5-7" fill="none" stroke="#555" stroke-width="1.600"/>`,
};

@customElement("app-root")
export class AppRoot extends LitElement {
  static styles = css`
    :host { display: flex; flex-direction: column; height: 100vh; overflow: hidden; position: relative; background: #f0f0f0; color: #000; font: 14px/20px "Noto Sans", "Noto Sans CJK JP", sans-serif; }
    button { font: inherit; color: inherit; background: none; border: 0; padding: 0; }
    .title { flex: none; display: flex; align-items: center; height: 29px; background: #edf3f9; padding: 0 2px; }
    .mask { width: 74px; height: 24px; border-radius: 5px; background: #000; margin: 0 2px 0 1px; }
    .title h1 { margin: 0 auto 0 0; font: 15px/20px "Noto Sans", sans-serif; }
    .title button { width: 59px; height: 29px; display: grid; place-items: center; }
    .menu { flex: none; display: flex; gap: 24px; height: 25px; padding: 0 8px; border-bottom: 1px solid #9b9b9b; align-items: center; }
    .menu button { font: 13px/20px "Noto Sans", "Noto Sans CJK JP", sans-serif; font-feature-settings: "palt"; white-space: nowrap; }
    .bars { flex: none; display: flex; justify-content: space-between; }
    .bar { display: flex; align-items: center; width: max-content; box-sizing: border-box; padding-right: 3px; border-right: 1px solid #9b9b9b; }
    .row1 { display: flex; height: 34px; border-bottom: 1px solid #9b9b9b; box-sizing: border-box; width: max-content; }
    .row2 { display: flex; height: 33px; width: max-content; }
    .grip { width: 3px; height: 26px; margin: 0 1px 0 3px; background: repeating-linear-gradient(#8f8f8f 0 2px, #f0f0f0 2px 4px); }
    .sep { width: 1px; height: 28px; background: #a4a4a4; margin: 0 3px 0 1px; }
    .tool { width: 34px; height: 30px; display: grid; place-items: center; box-sizing: border-box; }
    .tool.on { border: 1px solid; border-color: #9c9c9c #fff #fff #9c9c9c; background: #f8f8f8; width: 32px; margin: 0 1px; }
    .drop { width: 48px; height: 30px; display: flex; align-items: center; gap: 4px; padding-left: 5px; box-sizing: border-box; }
    .drop::after { content: ""; border: 4px solid transparent; border-top: 5px solid #000; border-bottom: 0; }
    .word { height: 30px; display: flex; align-items: center; gap: 4px; padding: 0 4px 0 8px; font: 15px/20px "Noto Sans CJK JP", sans-serif; white-space: nowrap; }
    .tf { width: 34px; height: 30px; box-sizing: border-box; color: #b4b4b4; font: 12px/20px "Noto Sans", sans-serif; }
    .tf.on { border: 1px solid; border-color: #9c9c9c #fff #fff #9c9c9c; background: #f8f8f8; width: 32px; margin: 0 1px; }
    .letter { font: bold 15px/20px "Liberation Sans", sans-serif; color: #444; }
    .right { display: flex; gap: 8px; padding: 3px 12px 0 0; align-items: flex-start; }
    .desk { flex: 1; position: relative; min-height: 0; overflow: hidden; background: #ababab; border-style: solid; border-color: #555 #f0f0f0 #eaeaea #8a8a8a; border-width: 2px 2px 1px 2px; }
    .tabs { flex: none; display: flex; height: 24px; border-top: 1px solid #000; padding-left: 5px; overflow: hidden; color: #7c7c7c; }
    .tabs button { padding: 0 16px; white-space: nowrap; font: 14px/20px "Noto Sans", sans-serif; position: relative; flex: none; }
    .tabs button + button { box-shadow: inset 1px 0 0 #8a8a8a; }
    .tabs button.on, .tabs button.on + button { box-shadow: none; }
    .tabs button.on { background: #fff; color: #000; border: 1px solid #000; border-top: 0; padding: 0 14px; }
    .status { flex: none; display: grid; grid-template-columns: 1024px 149px 131px 1fr; height: 31px; box-sizing: border-box; align-items: center; border-top: 2px solid #fafafa; border-bottom: 1px solid #b8c4d4; font: 14px/26px "Noto Sans", "Noto Sans CJK JP", sans-serif; }
    .status span { padding-left: 6px; border-left: 1px solid #a0a0a0; min-height: 26px; }
    .status .help { padding-left: 2px; border: 0; font-size: 13px; font-feature-settings: "palt"; }
    .dlg { position: absolute; right: 4px; bottom: 4px; width: 574px; height: 156px; box-sizing: border-box; display: flex; flex-direction: column; border-radius: 8px; overflow: hidden; background: linear-gradient(#59c489 25%, #3dafd2); box-shadow: 0 4px 14px #0008; }
    .dlg header { display: flex; align-items: center; height: 37px; padding: 0 0 0 12px; background: #f2f2f2; color: #8a8a8a; }
    .dlg h2 { margin: 0 auto 0 7px; font: 14px/20px "Noto Sans", sans-serif; }
    .dlg header button { width: 58px; height: 37px; display: grid; place-items: center; }
    .body { flex: 1; margin: 4px; background: #fff; padding: 4px; display: flex; flex-direction: column; gap: 2px; }
    .pad { display: grid; grid-template-columns: 80px 61px 60px 86px 68px 68px 68px; grid-template-rows: 31px 31px; column-gap: 8px; row-gap: 3px; }
    .pad > * { min-width: 0; }
    .step { display: grid; grid-template-columns: 37px 37px; gap: 6px; }
    .step button { border: 1px solid #b8b8b8; background: #fff; display: grid; place-items: center; }
    .choice { display: grid; height: 28px; align-items: center; }
    .choice > * { grid-area: 1 / 1; }
    .choice select { appearance: none; width: 100%; height: 28px; border: 1px solid #acacac; border-radius: 0; background: #e9e9e9; font: 14px/20px "Noto Sans", sans-serif; color: #000; padding: 0 6px; }
    .choice svg { justify-self: end; margin-right: 7px; pointer-events: none; }
    .act { border: 1px solid #a8b0b0; border-radius: 6px; color: #fff; font: 17px/24px "Noto Sans", "Noto Sans CJK JP", sans-serif; font-feature-settings: "palt"; white-space: nowrap; }
    .sell { background: #f50000; } .buy { background: #3b761d; } .econ { background: #ff4a00; } .excel { background: #157608; }
    .shot { background: #2f55d0; } .flat { background: #9a9a9a; } .trade { background: #068b8a; } .web { background: #00b9c6; }
    .plain { background: #fff; color: #333; }
    .foot { display: flex; align-items: center; height: 38px; font: 14px/20px "Noto Sans", "Noto Sans CJK JP", sans-serif; white-space: nowrap; }
    .foot label { display: flex; align-items: center; gap: 7px; margin-right: 6px; }
    .foot input { appearance: none; width: 17px; height: 17px; margin: 0 0 0 1px; border: 1px solid #333; background: #fff; display: grid; place-items: center; }
    .foot input:checked::after { content: ""; width: 9px; height: 5px; border: solid #222; border-width: 0 0 2px 2px; transform: translateY(-2px) rotate(-48deg); }
    .clock { box-sizing: border-box; height: 38px; padding: 5px 9px; border: 4px solid #f00; border-radius: 7px; box-shadow: 1px 2px 4px #0007, inset 1px 2px 4px #0007; margin-right: 6px; line-height: 20px; }
  `;

  private ico(name: string) {
    return html`<svg width="22" height="22" viewBox="0 0 22 22" fill="none">${icons[name]}</svg>`;
  }
  private tool(name: string, on = false) {
    return html`<button type="button" class=${classMap({ tool: true, on })} aria-label=${name}>${this.ico(name)}</button>`;
  }
  private drop(name: string) {
    return html`<button type="button" class="drop" aria-label=${name}>${this.ico(name)}</button>`;
  }

  render() {
    const sep = html`<span class="sep"></span>`;
    const grip = html`<span class="grip"></span>`;
    const tabs = ["USDJPY-cd,Daily", "USDJPY-cd,Weekly", "EURUSD-cd,H1", "_EURUSD_,M5 (offline)", "_EURUSD_,H1 (offline)", "_EURUSD_,H4 (offline)", "_EURUSD_,Daily (offline)", "_USDJPY_,M5 (offline)", "_USDJPY_,H1 (offline)"];
    return html`
      <header class="title">
        <svg width="20" height="20" viewBox="0 0 20 20"><rect width="20" height="20" rx="2" fill="#d0242a" /><path d="M2 3h5l11 14h-5zM15 4h3l-3 4-2-2zM2 16l3-4 2 2-2 3z" fill="#fff" /><path d="M11 3l3 2M3 9l3 4M13 8l4 4" stroke="#f09090" /></svg>
        <span class="mask"></span>
        <h1>FXTF-Live - Goldenway Japan Co., Ltd. - _EURUSD_,M5 (offline)</h1>
        <button type="button" aria-label="Minimize"><svg width="12" height="12" viewBox="0 0 12 12"><path d="M0 6.500h12" stroke="#111" /></svg></button>
        <button type="button" aria-label="Restore"><svg width="12" height="12" viewBox="0 0 12 12" fill="none" stroke="#111"><rect x="0.500" y="2.500" width="9" height="9" rx="1" /><path d="M2.500 0.500h7a2 2 0 0 1 2 2v7" /></svg></button>
        <button type="button" aria-label="Close"><svg width="12" height="12" viewBox="0 0 12 12"><path d="M0.500 0.500l11 11M11.500 0.500l-11 11" stroke="#111" /></svg></button>
      </header>
      <nav class="menu">
        ${["ファイル (F)", "表示 (V)", "挿入(I)", "チャート (C)", "ツール (T)", "ウィンドウ (W)", "ヘルプ (H)"].map((m) => html`<button type="button">${m}</button>`)}
      </nav>
      <div class="bars">
        <div>
          <div class="row1">
            <div class="bar">
              ${grip}${this.drop("newchart")}${this.drop("profiles")}${sep}
              ${["market", "cross", "star", "nav", "tester"].map((n) => this.tool(n))}${sep}
              <button type="button" class="word">${this.ico("order")}新規注文</button>
              ${["diamond", "cloud", "radio"].map((n) => this.tool(n))}
              <button type="button" class="word">${this.ico("auto")}自動売買</button>
            </div>
            <div class="bar">
              ${grip}${this.tool("bars")}${this.tool("candle", true)}${this.tool("line")}${sep}
              ${["zoomin", "zoomout", "tile"].map((n) => this.tool(n))}${sep}
              ${this.tool("scroll", true)}${this.tool("shift", true)}${sep}
              ${["indicator", "clock", "template"].map((n) => this.drop(n))}
            </div>
          </div>
          <div class="row2">
            <div class="bar">
              ${grip}${this.tool("cursor", true)}${this.tool("plusline")}${sep}
              ${["vline", "hline", "trend", "channel", "fibo"].map((n) => this.tool(n))}
              <button type="button" class="tool letter">A</button>
              ${this.tool("label")}${this.drop("arrows")}
            </div>
            <div class="bar">
              ${grip}${["M1", "M5", "M15", "M30", "H1", "H4", "D1", "W1", "MN"].map((t) => html`<button type="button" class=${classMap({ tf: true, on: t === "M5" })}>${t}</button>`)}
            </div>
          </div>
        </div>
        <div class="right">
          <button type="button" aria-label="Search"><svg width="22" height="26" viewBox="0 0 22 26"><path d="M4 20l6-6" stroke="#2a64b8" stroke-width="4" stroke-linecap="round" /><circle cx="13" cy="11" r="4.500" fill="#fff" stroke="#3a80d8" stroke-width="2" /></svg></button>
          <button type="button" aria-label="Messages"><svg width="30" height="26" viewBox="0 0 30 26"><path d="M9 10c6-3 13-1 12 5s-8 6-11 5l-4 4v-5c-4-3-2-7 3-9z" fill="#f4f4f4" stroke="#a8a8a8" /><circle cx="19" cy="10" r="10" fill="#dd3a22" /><text x="19" y="15" text-anchor="middle" fill="#fff" font-family="Noto Sans" font-size="15">1</text></svg></button>
        </div>
      </div>
      <main class="desk">
        ${windows.map((w) => html`<mdi-window .win=${w} style=${styleMap({ left: `${w.x - DESK[0]}px`, top: `${w.y - DESK[1]}px`, width: `${w.w}px`, height: `${w.h}px` })}></mdi-window>`)}
      </main>
      <nav class="tabs">${tabs.map((t, i) => html`<button type="button" class=${classMap({ on: i === 3 })}>${t}</button>`)}</nav>
      <footer class="status"><span class="help">F1キーでヘルプが表示されます</span><span>Default</span><span></span><span></span></footer>
      <section class="dlg" aria-label="Trade Trainer">
        <header>
          <svg width="16" height="18" viewBox="0 0 16 18"><path d="M2 1l10-1 2 2v15l-12-1z" fill="#f4d838" stroke="#b89a20" /><path d="M2 1l10-1 2 2v3h-12z" fill="#2a6aa8" /><path d="M4 8l2 2 2-2 3 2M5 13h5" stroke="#2a5a98" fill="none" /></svg>
          <h2>Trade Trainer - Operation</h2>
          <button type="button" aria-label="Minimize"><svg width="12" height="12" viewBox="0 0 12 12"><path d="M0 5.500h12" stroke="#999" /></svg></button>
          <button type="button" aria-label="Maximize"><svg width="12" height="12" viewBox="0 0 12 12"><rect x="0.500" y="0.500" width="11" height="11" fill="none" stroke="#999" /></svg></button>
          <button type="button" aria-label="Close"><svg width="12" height="12" viewBox="0 0 12 12"><path d="M0.500 0.500l11 11M11.500 0.500l-11 11" stroke="#888" /></svg></button>
        </header>
        <div class="body">
          <div class="pad">
            <div class="step">
              <button type="button" aria-label="Back"><svg width="14" height="14" viewBox="0 0 14 14"><path d="M13 0v14l-12-7z" fill="#0a0a9a" /></svg></button>
              <button type="button" aria-label="Forward"><svg width="14" height="14" viewBox="0 0 14 14"><path d="M1 0v14l12-7z" fill="#0a0a9a" /></svg></button>
            </div>
            <button type="button" class="act sell">売り</button>
            <button type="button" class="act buy">買い</button>
            <button type="button" class="act econ">経済指標</button>
            <button type="button" class="act excel">Excel</button>
            <button type="button" class="act shot">スクショ</button>
            <button type="button" class="act plain">保存</button>
            <div class="choice">
              <select aria-label="Timeframe"><option>H4</option></select>
              <svg width="8" height="6" viewBox="0 0 8 6"><path d="M1 1l3 3.500 3-3.500" fill="none" stroke="#555" stroke-width="1.500" /></svg>
            </div>
            <button type="button" class="act flat">決済</button>
            <button type="button" class="act flat">全決済</button>
            <button type="button" class="act trade">トレード</button>
            <button type="button" class="act web">HTML</button>
            <button type="button" class="act plain">設定</button>
            <button type="button" class="act plain">終了</button>
          </div>
          <div class="foot">
            <label><input type="checkbox" checked />矢印</label>
            <span class="clock">日本時刻 2024/01/05 19:00:00 (金)</span>
            <span>現在の資金 10000 USD (0%)</span>
          </div>
        </div>
      </section>
    `;
  }
}
